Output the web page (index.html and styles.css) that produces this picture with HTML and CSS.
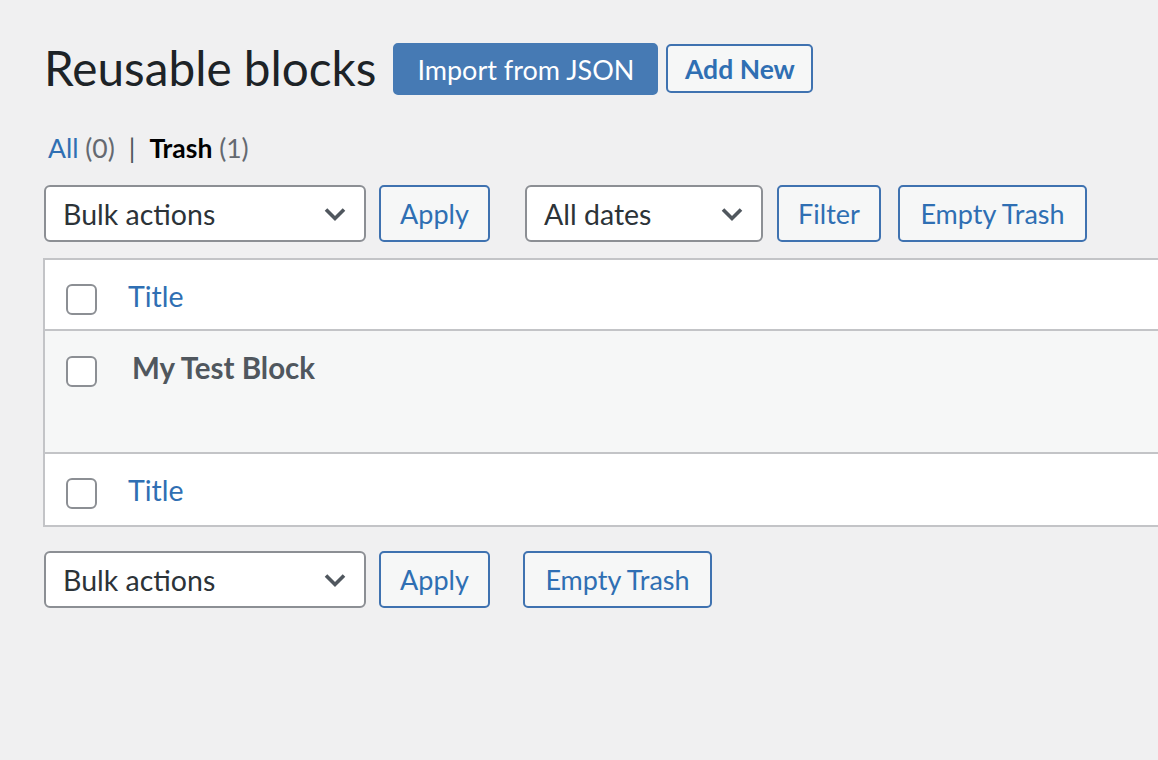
FILE: index.html
```html
<!DOCTYPE html>
<html lang="en">
<head>
<meta charset="utf-8">
<title>Reusable blocks</title>
<link rel="stylesheet" href="styles.css">
</head>
<body>
<div class="wrap">
  <div class="page-head">
    <h1 class="page-title">Reusable blocks</h1>
    <button class="btn btn-primary">Import from JSON</button>
    <a class="title-action" href="#">Add New</a>
  </div>

  <ul class="subsubsub">
    <li><a href="#">All</a> <span class="count">(0)</span></li>
    <li class="sep">|</li>
    <li><strong class="current">Trash</strong> <span class="count">(1)</span></li>
  </ul>

  <div class="tablenav top">
    <div class="select sel-bulk"><span>Bulk actions</span><svg class="chev" viewBox="0 0 20 20"><path d="M4 7l6 6 6-6" fill="none" stroke="currentColor" stroke-width="2.4"/></svg></div>
    <button class="btn btn-secondary btn-apply">Apply</button>
    <div class="select sel-dates"><span>All dates</span><svg class="chev" viewBox="0 0 20 20"><path d="M4 7l6 6 6-6" fill="none" stroke="currentColor" stroke-width="2.4"/></svg></div>
    <button class="btn btn-secondary btn-filter">Filter</button>
    <button class="btn btn-secondary btn-empty">Empty Trash</button>
  </div>

  <div class="table">
    <div class="row row-head">
      <span class="cb"></span>
      <a class="col-title" href="#">Title</a>
    </div>
    <div class="row row-item">
      <span class="cb"></span>
      <strong class="item-title">My Test Block</strong>
    </div>
    <div class="row row-foot">
      <span class="cb"></span>
      <a class="col-title" href="#">Title</a>
    </div>
  </div>

  <div class="tablenav bottom">
    <div class="select sel-bulk"><span>Bulk actions</span><svg class="chev" viewBox="0 0 20 20"><path d="M4 7l6 6 6-6" fill="none" stroke="currentColor" stroke-width="2.4"/></svg></div>
    <button class="btn btn-secondary btn-apply">Apply</button>
    <button class="btn btn-secondary btn-empty-bottom">Empty Trash</button>
  </div>
</div>
</body>
</html>
```

FILE: styles.css
```css
html, body {
  margin: 0;
  padding: 0;
  background: #f0f0f1;
  overflow: hidden;
}
body {
  font-family: Lato, "Noto Sans", sans-serif;
  color: #3c434a;
  width: 1158px;
  height: 760px;
}
.wrap {
  padding: 43px 0 0 44px;
}
a { text-decoration: none; color: #2f6fb3; }

.page-head {
  display: flex;
  align-items: flex-start;
  height: 52px;
}
.page-title {
  margin: 0 17px 0 0;
  font-size: 47.7px;
  font-weight: 400;
  line-height: 50px;
  color: #1d2327;
}
.btn {
  font-family: inherit;
  box-sizing: border-box;
  display: inline-flex;
  align-items: center;
  justify-content: center;
  border-radius: 5px;
  cursor: pointer;
  margin: 0;
  padding: 0;
}
.btn-primary {
  height: 52px;
  width: 265px;
  background: #467ab4;
  border: 2px solid #467ab4;
  color: #fff;
  font-size: 27px;
}
.title-action {
  box-sizing: border-box;
  margin: 1px 0 0 8px;
  height: 49px;
  width: 147px;
  justify-content: center;
  display: inline-flex;
  align-items: center;
  border: 2px solid #3f72b0;
  border-radius: 5px;
  background: #f6f7f7;
  color: #2f6fb3;
  font-weight: 700;
  font-size: 26.5px;
}

.subsubsub {
  list-style: none;
  margin: 37px 0 0 4px;
  padding: 0;
  display: flex;
  gap: 11px;
  font-size: 26.5px;
  line-height: 32px;
  color: #646970;
}
.subsubsub li { white-space: pre; }
.subsubsub a { color: #2f6fb3; }
.subsubsub .sep { color: #50575e; padding: 0 3px; }
.subsubsub .current { color: #000; font-weight: 700; }

.tablenav {
  display: flex;
  align-items: center;
  height: 57px;
}
.tablenav.top { margin-top: 21px; }
.tablenav.bottom { margin-top: 24px; }

.select {
  box-sizing: border-box;
  height: 57px;
  border: 2px solid #8c8f94;
  border-radius: 6px;
  background: #fff;
  display: flex;
  align-items: center;
  justify-content: space-between;
  padding: 0 14px 0 17px;
  font-size: 28.5px;
  color: #2c3338;
}
.chev { width: 30px; height: 30px; color: #50575e; }
.sel-bulk { width: 322px; }
.sel-dates { width: 238px; margin-left: 35px; }

.btn-secondary {
  height: 57px;
  background: #f6f7f7;
  border: 2px solid #3f72b0;
  color: #2f6fb3;
  font-size: 27px;
}
.btn-apply { width: 111px; margin-left: 13px; }
.btn-filter { width: 104px; margin-left: 14px; }
.btn-empty { width: 189px; margin-left: 17px; }
.btn-empty-bottom { width: 189px; margin-left: 33px; }

.table {
  margin-top: 16px;
  margin-left: -1px;
  width: 1200px;
  border: 2px solid #c3c4c7;
  border-right: 0;
  background: #fff;
}
.row {
  display: flex;
  align-items: flex-start;
  box-sizing: border-box;
}
.row-head {
  height: 71px;
  border-bottom: 2px solid #c3c4c7;
  padding-top: 24px;
}
.row-item {
  height: 121px;
  background: #f6f7f7;
  padding-top: 25px;
}
.row-foot {
  height: 73px;
  border-top: 2px solid #c3c4c7;
  padding-top: 24px;
}
.cb {
  box-sizing: border-box;
  width: 31px;
  height: 31px;
  margin-left: 21px;
  border: 2px solid #8c8f94;
  border-radius: 6px;
  background: #fff;
  flex: none;
}
.col-title {
  margin-left: 31px;
  font-size: 28.5px;
  line-height: 30px;
  margin-top: -3px;
}
.item-title {
  margin-left: 35px;
  font-size: 29.5px;
  line-height: 30px;
  color: #50575e;
  font-weight: 700;
  margin-top: -3px;
}
```
